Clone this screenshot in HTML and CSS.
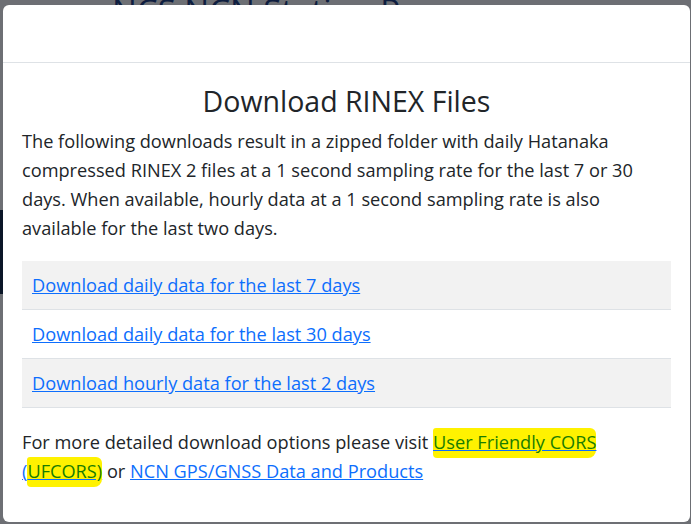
FILE: index.html
```html
<!DOCTYPE html>
<html lang="en">
    <head>
        <meta charset="utf-8">
        <meta name="viewport" content="width=device-width, initial-scale=1">
        <title>NCS NCN Station Pages</title>
        <link rel="stylesheet" href="styles.css">
    </head>
    <body>
        <div class="page">
            <h1 class="pagetitle">NCS NCN Station Pages</h1>
            <div class="sidebar"></div>
        </div>
        <div class="backdrop"></div>

        <div class="modal">
            <div class="modal-header"></div>
            <div class="modal-body">
                <h3 class="modal-title">Download RINEX Files</h3>
                <p class="intro">The following downloads result in a zipped folder with daily Hatanaka compressed RINEX 2 files at a 1 second sampling rate for the last 7 or 30 days. When available, hourly data at a 1 second sampling rate is also available for the last two days.</p>
                <ul class="downloads">
                    <li><a href="#">Download daily data for the last 7 days</a></li>
                    <li><a href="#">Download daily data for the last 30 days</a></li>
                    <li><a href="#">Download hourly data for the last 2 days</a></li>
                </ul>
                <p class="more">For more detailed download options please visit <a href="#"><span class="marker">User Friendly CORS</span> (<span class="marker">UFCORS)</span></a> or <a href="#">NCN GPS/GNSS Data and Products</a></p>
            </div>
        </div>
    </body>
</html>
```
FILE: styles.css
```css
body {
    margin: 0;
    height: 100vh;
    overflow: hidden;
    background: #dadfe8;
    font-family: "Open Sans", "Noto Sans", sans-serif;
}

.page {
    position: relative;
    height: 100%;
}

.pagetitle {
    margin: -12px 0 0 112px;
    font-size: 33px;
    font-weight: 400;
    color: #1c3c80;
}

.sidebar {
    position: absolute;
    left: 0;
    top: 222px;
    width: 20px;
    height: 84px;
    background: #152c4e;
}

.backdrop {
    position: fixed;
    inset: 0;
    background: rgba(0, 0, 0, 0.5);
}

.modal {
    position: fixed;
    top: 5px;
    left: 3px;
    right: 1px;
    background: #fff;
    border-radius: 6px;
    color: #212529;
}

.modal-header {
    height: 57px;
    border-bottom: 1px solid #dee2e6;
}

.modal-body {
    padding: 16px 19px 36px 19px;
}

.modal-title {
    margin: 5px 0 9px;
    text-align: center;
    font-size: 28.5px;
    font-weight: 500;
    line-height: 1.2;
}

.modal-body p {
    margin: 0;
    font-size: 18.2px;
    line-height: 29px;
}

.modal-body .intro {
    margin-bottom: 18px;
}

.downloads {
    list-style: none;
    margin: 0 0 20px;
    padding: 0;
    font-size: 18.2px;
}

.downloads li {
    padding: 10px 10px;
    line-height: 28px;
    border-bottom: 1px solid #dee2e6;
}

.downloads li:nth-child(odd) {
    background: #f2f2f2;
}

a {
    color: #0d6efd;
}

.marker {
    background: #fff200;
    color: #1a7d00;
    padding: 2px 0 4px;
    border-radius: 3px 6px 8px 4px;
}
```
